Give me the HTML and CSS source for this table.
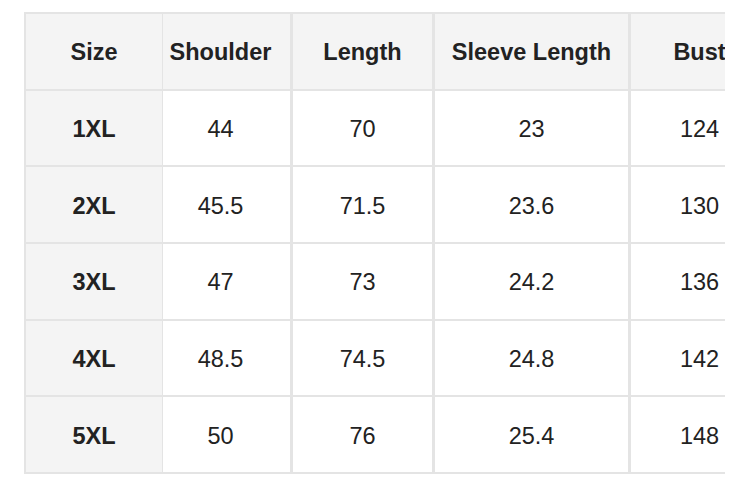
FILE: index.html
```html
<!DOCTYPE html>
<html>
<head>
<meta charset="utf-8">
<link rel="stylesheet" href="styles.css">
</head>
<body>
<div class="wrap">
  <div class="grid">
    <div class="cell head first">Size</div>
    <div class="cell head c2">Shoulder</div>
    <div class="cell head">Length</div>
    <div class="cell head">Sleeve Length</div>
    <div class="cell head">Bust</div>

    <div class="cell first">1XL</div>
    <div class="cell c2">44</div>
    <div class="cell">70</div>
    <div class="cell">23</div>
    <div class="cell">124</div>

    <div class="cell first">2XL</div>
    <div class="cell c2">45.5</div>
    <div class="cell">71.5</div>
    <div class="cell">23.6</div>
    <div class="cell">130</div>

    <div class="cell first">3XL</div>
    <div class="cell c2">47</div>
    <div class="cell">73</div>
    <div class="cell">24.2</div>
    <div class="cell">136</div>

    <div class="cell first">4XL</div>
    <div class="cell c2">48.5</div>
    <div class="cell">74.5</div>
    <div class="cell">24.8</div>
    <div class="cell">142</div>

    <div class="cell first">5XL</div>
    <div class="cell c2">50</div>
    <div class="cell">76</div>
    <div class="cell">25.4</div>
    <div class="cell">148</div>
  </div>
</div>
</body>
</html>
```

FILE: styles.css
```css
html, body {
  margin: 0;
  padding: 0;
  background: #ffffff;
}
body {
  font-family: "Liberation Sans", Arial, sans-serif;
  color: #222222;
}
.wrap {
  margin: 12px 0 0 24px;
  width: 701px;
  overflow: hidden;
}
.grid {
  display: grid;
  grid-template-columns: 137px 130px 142px 196px 140px;
  grid-auto-rows: 76.7px;
  width: 747px;
  border-top: 2px solid #e4e4e4;
  border-left: 2px solid #e4e4e4;
}
.cell {
  box-sizing: border-box;
  display: flex;
  align-items: center;
  justify-content: center;
  padding-top: 3px;
  font-size: 23.5px;
  border-right: 3px solid #e4e4e4;
  border-bottom: 2px solid #e4e4e4;
  background: #ffffff;
}
.cell.head {
  background: #f4f4f4;
  font-weight: bold;
}
.cell.first {
  background: #f4f4f4;
  font-weight: bold;
  border-right: 1px solid #e4e4e4;
}
.cell.c2 {
  padding-right: 12px;
}
```
